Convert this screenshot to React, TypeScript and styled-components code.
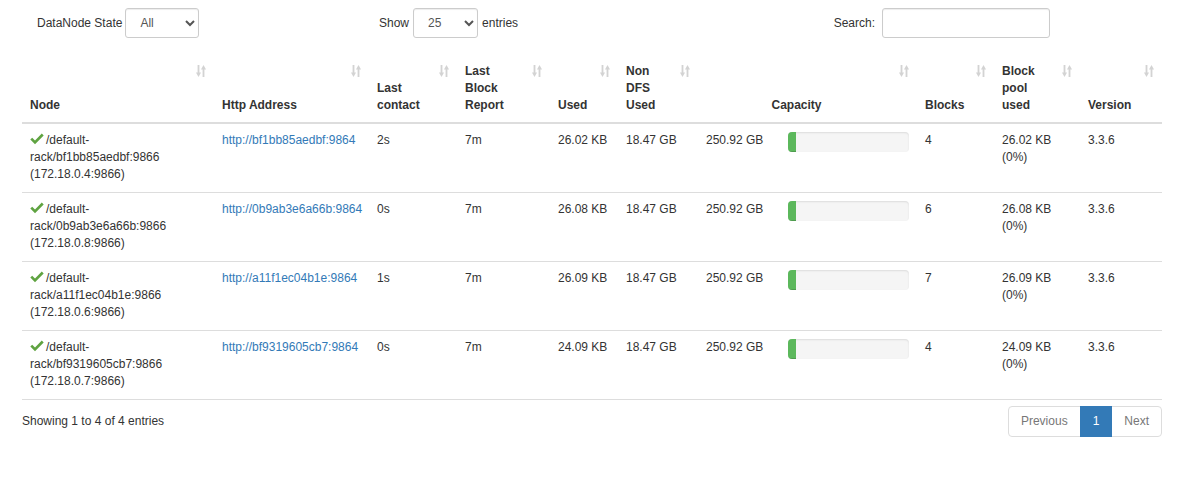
import { ReactElement } from "react";
import styled, { createGlobalStyle } from "styled-components";

const GlobalStyle = createGlobalStyle`
    body {
        margin: 0;
        background: #fff;
        font-family: "Liberation Sans", Arial, Helvetica, sans-serif;
        font-size: 12px;
        line-height: 17px;
        color: #333;
    }
`;

const Page = styled.div`
    padding: 8px 32px 0 22px;
`;

const Toolbar = styled.div`
    display: flex;
    align-items: center;
    height: 30px;
    padding: 0 112px 0 15px;
`;

const FilterGroup = styled.label<{ $width?: number }>`
    display: flex;
    align-items: center;
    gap: 3px;
    width: ${(p) => (p.$width ? `${p.$width}px` : "auto")};
    margin-left: ${(p) => (p.$width ? "0" : "auto")};
    font-weight: normal;
`;

const LengthGroup = styled.label`
    display: flex;
    align-items: center;
    gap: 4px;
`;

const Select = styled.select<{ $width: number }>`
    width: ${(p) => p.$width}px;
    height: 30px;
    padding: 5px 6px 5px 10px;
    font-family: inherit;
    font-size: 12px;
    color: #555;
    background: #fff;
    border: 1px solid #ccc;
    border-radius: 3px;
    box-shadow: inset 0 1px 1px rgba(0, 0, 0, 0.075);
`;

const SearchInput = styled.input`
    width: 168px;
    height: 30px;
    box-sizing: border-box;
    margin-left: 4px;
    padding: 5px 10px;
    font-family: inherit;
    font-size: 12px;
    border: 1px solid #ccc;
    border-radius: 3px;
    box-shadow: inset 0 1px 1px rgba(0, 0, 0, 0.075);
`;

const Table = styled.table`
    width: 100%;
    margin-top: 17px;
    border-collapse: collapse;
    table-layout: fixed;
    border-bottom: 1px solid #ddd;
`;

const HeadCell = styled.th<{ $center?: boolean }>`
    position: relative;
    padding: 8px 30px 8px 8px;
    text-align: ${(p) => (p.$center ? "center" : "left")};
    vertical-align: bottom;
    font-weight: bold;
    border-bottom: 2px solid #ddd;
`;

const SortIcon = styled.svg`
    position: absolute;
    top: 10px;
    right: 8px;
    width: 10px;
    height: 12px;
    fill: #d3d3d3;
`;

const Cell = styled.td`
    padding: 8px 8px 9px;
    vertical-align: top;
    border-top: 1px solid #ddd;
`;

const AliveIcon = styled.svg`
    display: inline-block;
    width: 14px;
    height: 12px;
    margin-right: 2px;
    vertical-align: -1px;
    fill: #5fa341;
`;

const Link = styled.a`
    color: #337ab7;
    text-decoration: none;
`;

const CapacityBox = styled.div`
    display: flex;
    justify-content: space-between;
    align-items: flex-start;
`;

const Progress = styled.div`
    width: 121px;
    height: 20px;
    overflow: hidden;
    background: #f5f5f5;
    border-radius: 4px;
    box-shadow: inset 0 1px 2px rgba(0, 0, 0, 0.1);
`;

const ProgressBar = styled.div`
    height: 100%;
    background: #5cb85c;
    box-shadow: inset 0 -1px 0 rgba(0, 0, 0, 0.15);
`;

const Footer = styled.div`
    display: flex;
    align-items: center;
    justify-content: space-between;
    margin-top: 6px;
`;

const Pagination = styled.ul`
    display: flex;
    margin: 0;
    padding: 0;
    list-style: none;
`;

const PageItem = styled.li<{ $active?: boolean; $first?: boolean; $last?: boolean }>`
    padding: 6px 12px;
    margin-left: ${(p) => (p.$first ? "0" : "-1px")};
    color: ${(p) => (p.$active ? "#fff" : "#777")};
    background: ${(p) => (p.$active ? "#337ab7" : "#fff")};
    border: 1px solid ${(p) => (p.$active ? "#337ab7" : "#ddd")};
    border-radius: ${(p) => (p.$first ? "4px 0 0 4px" : p.$last ? "0 4px 4px 0" : "0")};
    position: relative;
    z-index: ${(p) => (p.$active ? 2 : 1)};
`;

const columns = [
  { title: "Node", width: 192 },
  { title: "Http Address", width: 155 },
  { title: "Last contact", width: 88 },
  { title: "Last Block Report", width: 93 },
  { title: "Used", width: 68 },
  { title: "Non DFS Used", width: 80 },
  { title: "Capacity", width: 219, center: true },
  { title: "Blocks", width: 77 },
  { title: "Block pool used", width: 86 },
  { title: "Version", width: 82 },
];

const nodes = [
  { host: "bf1bb85aedbf", ip: "172.18.0.4", contact: "2s", used: "26.02 KB", blocks: 4 },
  { host: "0b9ab3e6a66b", ip: "172.18.0.8", contact: "0s", used: "26.08 KB", blocks: 6 },
  { host: "a11f1ec04b1e", ip: "172.18.0.6", contact: "1s", used: "26.09 KB", blocks: 7 },
  { host: "bf9319605cb7", ip: "172.18.0.7", contact: "0s", used: "24.09 KB", blocks: 4 },
];

const Sort = () => (
  <SortIcon viewBox="0 0 10 12">
    <rect x="1.6" y="0" width="1.8" height="8.5" />
    <polygon points="0,7.5 5,7.5 2.5,12" />
    <rect x="6.6" y="3.5" width="1.8" height="8.5" />
    <polygon points="5,4.5 10,4.5 7.5,0" />
  </SortIcon>
);

export const App = (): ReactElement => {
  return (
    <Page>
      <GlobalStyle />
      <Toolbar>
        <FilterGroup $width={342}>
          DataNode State
          <Select $width={74} defaultValue="all">
            <option value="all">All</option>
            <option value="live">In Service</option>
            <option value="dead">Dead</option>
          </Select>
        </FilterGroup>
        <LengthGroup>
          Show
          <Select $width={65} defaultValue="25">
            <option value="10">10</option>
            <option value="25">25</option>
            <option value="50">50</option>
            <option value="100">100</option>
          </Select>
          entries
        </LengthGroup>
        <FilterGroup>
          Search:
          <SearchInput type="search" />
        </FilterGroup>
      </Toolbar>

      <Table>
        <colgroup>
          {columns.map((c) => (
            <col key={c.title} style={{ width: c.width }} />
          ))}
        </colgroup>
        <thead>
          <tr>
            {columns.map((c) => (
              <HeadCell key={c.title} $center={c.center}>
                {c.title}
                <Sort />
              </HeadCell>
            ))}
          </tr>
        </thead>
        <tbody>
          {nodes.map((n) => (
            <tr key={n.host}>
              <Cell>
                <AliveIcon viewBox="0 0 14 12">
                  <path d="M0.3 6.6 L2.2 4.7 L5 7.4 L11.8 0.6 L13.7 2.5 L5 11.2 Z" />
                </AliveIcon>
                /default-rack/{n.host}:9866 ({n.ip}:9866)
              </Cell>
              <Cell>
                <Link href="#">http://{n.host}:9864</Link>
              </Cell>
              <Cell>{n.contact}</Cell>
              <Cell>7m</Cell>
              <Cell>{n.used}</Cell>
              <Cell>18.47 GB</Cell>
              <Cell>
                <CapacityBox>
                  250.92 GB
                  <Progress>
                    <ProgressBar style={{ width: "7%" }} />
                  </Progress>
                </CapacityBox>
              </Cell>
              <Cell>{n.blocks}</Cell>
              <Cell>{n.used} (0%)</Cell>
              <Cell>3.3.6</Cell>
            </tr>
          ))}
        </tbody>
      </Table>

      <Footer>
        <div>Showing 1 to 4 of 4 entries</div>
        <Pagination>
          <PageItem $first>Previous</PageItem>
          <PageItem $active>1</PageItem>
          <PageItem $last>Next</PageItem>
        </Pagination>
      </Footer>
    </Page>
  );
};

export default App;
